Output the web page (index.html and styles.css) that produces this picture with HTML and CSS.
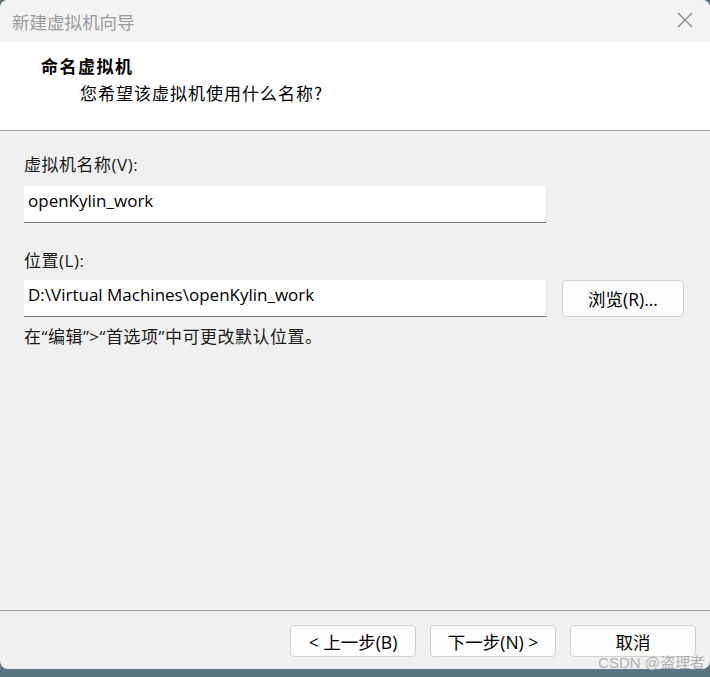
FILE: index.html
```html
<!DOCTYPE html>
<html lang="zh-CN">
<head>
<meta charset="utf-8">
<title>新建虚拟机向导</title>
<link rel="stylesheet" href="styles.css">
</head>
<body>
<div class="window">
  <div class="titlebar">
    <span class="title">新建虚拟机向导</span>
    <svg class="close" width="16" height="16" viewBox="0 0 16 16"><path d="M1 1L15 15M15 1L1 15" stroke="#8a8a8a" stroke-width="1.3" fill="none"/></svg>
  </div>
  <div class="header">
    <div class="h-title">命名虚拟机</div>
    <div class="h-sub">您希望该虚拟机使用什么名称?</div>
  </div>
  <div class="content">
    <div class="label">虚拟机名称(V):</div>
    <div class="row">
      <div class="input">openKylin_work</div>
    </div>
    <div class="label label2">位置(L):</div>
    <div class="row">
      <div class="input">D:\Virtual Machines\openKylin_work</div>
      <div class="btn browse">浏览(R)...</div>
    </div>
    <div class="hint">在“编辑”&gt;“首选项”中可更改默认位置。</div>
  </div>
  <div class="footer">
    <div class="btn fbtn">&lt; 上一步(B)</div>
    <div class="btn fbtn">下一步(N) &gt;</div>
    <div class="btn fbtn">取消</div>
  </div>
</div>
<div class="watermark">CSDN @盗理者</div>
</body>
</html>
```
FILE: styles.css
```css
html, body {
  margin: 0;
  padding: 0;
}
body {
  position: relative;
  width: 710px;
  height: 677px;
  background: #5b7482;
  overflow: hidden;
  font-family: "Open Sans", "Noto Sans CJK SC", sans-serif;
  font-size: 17px;
  color: #000;
}
.window {
  width: 710px;
  height: 669px;
  background: #f0f0f0;
  border-radius: 8px;
  overflow: hidden;
  display: flex;
  flex-direction: column;
}
.titlebar {
  height: 42px;
  background: #f3f3f3;
  display: flex;
  align-items: center;
  justify-content: space-between;
  padding: 0 17px 0 12px;
  flex: none;
}
.title {
  color: #9a9a9a;
  font-size: 17.5px;
  font-family: "Noto Sans CJK SC", sans-serif;
}
.close {
  display: block;
  margin-top: -2px;
}
.header {
  height: 89px;
  background: #fff;
  border-bottom: 1px solid #a0a0a0;
  box-sizing: border-box;
  flex: none;
  padding: 12px 0 0 41px;
  font-family: "Noto Sans CJK SC", sans-serif;
}
.h-title {
  font-weight: bold;
  font-size: 17px;
  line-height: 24px;
  letter-spacing: 1.5px;
}
.h-sub {
  margin-left: 39px;
  margin-top: 3px;
  font-size: 17px;
  line-height: 24px;
  letter-spacing: 1px;
}
.content {
  flex: 1;
  padding: 22px 0 0 24px;
  border-bottom: 1px solid #a0a0a0;
}
.label {
  font-size: 17px;
  line-height: 24px;
  color: #1a1a1a;
  height: 33px;
  letter-spacing: 0.5px;
}
.label2 {
  margin-top: 26px;
  height: 31px;
}
.row {
  display: flex;
  align-items: center;
  gap: 15px;
}
.input {
  width: 523px;
  height: 37px;
  box-sizing: border-box;
  background: #fff;
  border-bottom: 1px solid #7a7a7a;
  border-right: 1px solid #e2e2e2;
  padding: 0 4px;
  font-size: 17px;
  line-height: 30px;
}
.btn {
  box-sizing: border-box;
  background: #fdfdfd;
  border: 1px solid #d0d0d0;
  border-radius: 4px;
  display: flex;
  align-items: center;
  justify-content: center;
  font-size: 17.5px;
}
.browse {
  width: 122px;
  height: 37px;
}
.hint {
  margin-top: 8px;
  font-size: 17px;
  line-height: 24px;
  color: #1a1a1a;
  letter-spacing: 0.5px;
}
.footer {
  height: 58px;
  flex: none;
  display: flex;
  justify-content: flex-end;
  gap: 14px;
  padding: 14px 14px 0 0;
  box-sizing: border-box;
}
.fbtn {
  width: 126px;
  height: 32px;
}
.watermark {
  position: absolute;
  right: 5px;
  bottom: 6px;
  font-size: 15px;
  line-height: 17px;
  color: #b0b0b0;
  font-family: "Liberation Sans", "Noto Sans CJK SC", sans-serif;
}
```
